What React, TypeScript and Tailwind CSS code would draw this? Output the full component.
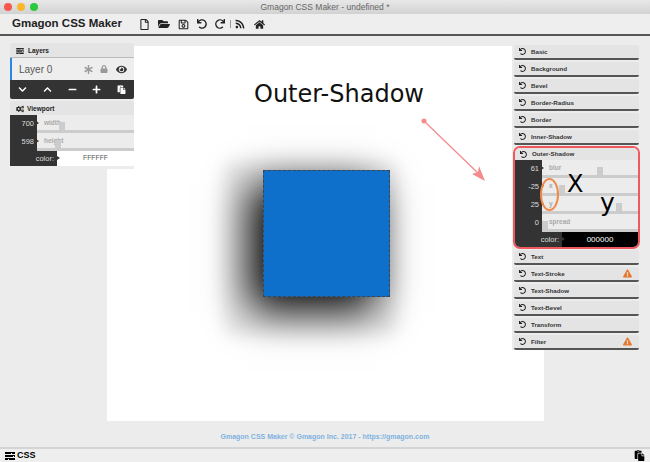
import React from "react";
import {
  FaRegFile,
  FaFolderOpen,
  FaRegSave,
  FaUndo,
  FaRedo,
  FaRss,
  FaHome,
  FaAsterisk,
  FaLock,
  FaEye,
  FaChevronDown,
  FaChevronUp,
  FaMinus,
  FaPlus,
  FaPaste,
  FaCogs,
  FaExclamationTriangle,
} from "react-icons/fa";

const TasksIcon = ({ className }: { className?: string }) => (
  <svg viewBox="0 0 10 8" className={className} fill="currentColor">
    <path d="M0 0h10v2H7V1H6v1H0zM0 3h10v2H9V4H8v1H0zM0 6h10v2H4V7H3v1H0z" />
  </svg>
);

const PanelRow = ({ label, warn }: { label: string; warn?: boolean }) => (
  <div className="flex h-[15px] w-[125px] items-center rounded-[2px] border-b-2 border-[#555] bg-[#e4e4e4] pl-[5px] pr-[5px] text-[6.2px] font-bold text-[#333]">
    <FaUndo className="mr-[5px] size-[7px] text-[#222]" />
    <span>{label}</span>
    {warn && <FaExclamationTriangle className="ml-auto mr-[2px] size-[9px] text-[#e8772e]" />}
  </div>
);

const Slider = ({ value, label, thumb }: { value: string; label: string; thumb: string }) => (
  <div className="flex h-[18px]">
    <div className="flex h-full w-[27px] items-center justify-end bg-[#333] pr-[3px] text-[7.5px] text-[#ddd]">
      {value}
    </div>
    <div className="relative flex-1 border-b-[3px] border-[#ccc] bg-[#ececec] pl-[7px] pt-[3px] text-[6.5px] font-bold text-[#aaa]">
      <span className="absolute -left-[1px] top-[6px] border-y-[2px] border-l-[3px] border-y-transparent border-l-[#333]" />
      {label}
      <span className={`absolute bottom-0 h-[8px] w-[6px] bg-[#ccc] ${thumb}`} />
    </div>
  </div>
);

const ColorRow = ({ value, dark }: { value: string; dark?: boolean }) => (
  <div className="flex h-[15px]">
    <div className="relative flex h-full w-[47px] items-center justify-end bg-[#333] pr-[3px] text-[7.5px] text-[#ddd]">
      color:
      <span className="absolute -right-[3px] top-[5px] z-10 border-y-[2px] border-l-[3px] border-y-transparent border-l-[#333]" />
    </div>
    <div className={`flex flex-1 items-center justify-center ${dark ? "bg-black text-[8px] text-white" : "bg-white text-[6.8px] text-[#555]"}`}>
      {value}
    </div>
  </div>
);

export default function App() {
  return (
    <div className="relative flex h-[462px] w-[650px] flex-col overflow-hidden bg-[#ececec] font-['Liberation_Sans',sans-serif]">
      {/* window title bar */}
      <div className="relative flex h-[14px] items-center justify-center bg-gradient-to-b from-[#e8e8e8] to-[#d2d2d2] text-[8.5px] text-[#666]">
        <div className="absolute left-[4px] top-[3px] flex gap-[5px]">
          <span className="size-[8px] rounded-full bg-[#f9584f]" />
          <span className="size-[8px] rounded-full bg-[#fbb72c]" />
          <span className="size-[8px] rounded-full bg-[#2cc840]" />
        </div>
        Gmagon CSS Maker - undefined *
      </div>

      {/* toolbar */}
      <div className="flex h-[22px] items-center border-b-2 border-[#555] bg-[#eeeeee] pl-[12px] text-[#222]">
        <span className="w-[127px] text-[11.5px] font-bold">Gmagon CSS Maker</span>
        <div className="flex items-center gap-[8px] text-[11px]">
          <FaRegFile />
          <FaFolderOpen className="text-[12px]" />
          <FaRegSave />
          <FaUndo className="text-[10px]" />
          <FaRedo className="text-[10px]" />
          <span className="-ml-[3px] h-[8px] w-px bg-[#999]" />
          <FaRss className="-ml-[4px] text-[10px]" />
          <FaHome className="ml-[1px] text-[11px]" />
        </div>
      </div>

      {/* canvas */}
      <div className="flex flex-1 flex-col items-center pt-[10px]">
        <div className="flex h-[375px] w-[437px] items-start justify-center bg-white pl-[2px] pt-[124px]">
          <div className="size-[127px] border border-dashed border-[#444] bg-[#0e70cb] shadow-[-14px_14px_40px_#000,-16px_15px_16px_22px_#ebebeb]" />
        </div>
        <div className="mt-[11px] text-[7px] font-bold text-[#7fb2e0]">
          Gmagon CSS Maker © Gmagon Inc. 2017 - https://gmagon.com
        </div>
      </div>

      {/* bottom bar */}
      <div className="flex h-[15px] items-center justify-between border-t-2 border-[#d4d4d4] bg-[#eeeeee] pl-[5px] pr-[5px] text-black">
        <div className="flex items-center gap-[2px] text-[9px] font-bold">
          <TasksIcon className="h-[8px] w-[10px]" />
          CSS
        </div>
        <FaPaste className="text-[11px]" />
      </div>

      {/* left floating panels */}
      <div className="absolute left-[10px] top-[43px] flex w-[124px] flex-col bg-[#ececec] pb-[3px]">
        <div className="flex h-[15px] items-center rounded-t-[3px] border-b border-[#bbb] bg-[#e4e4e4] pl-[6px] pt-[1px] text-[6.5px] font-bold text-[#222]">
          <TasksIcon className="mr-[4px] h-[6px] w-[8px]" />
          Layers
        </div>
        <div className="flex h-[22px] items-center border-l-2 border-[#2a86e8] bg-[#eeeeee] pl-[7px] pr-[7px] text-[10px] text-[#555]">
          <span className="flex-1">Layer 0</span>
          <FaAsterisk className="mr-[7px] text-[9px] text-[#999]" />
          <FaLock className="mr-[8px] text-[8px] text-[#999]" />
          <FaEye className="text-[11px] text-[#333]" />
        </div>
        <div className="flex h-[19px] items-center justify-between rounded-b-[2px] bg-[#333] pl-[8px] pr-[8px] text-[9px] text-white">
          <FaChevronDown />
          <FaChevronUp />
          <FaMinus />
          <FaPlus />
          <FaPaste />
        </div>
        <div className="mt-[2px] flex h-[14px] items-center rounded-t-[3px] bg-[#e4e4e4] pl-[6px] pt-[1px] text-[6.5px] font-bold text-[#222]">
          <FaCogs className="mr-[3px] text-[8px]" />
          Viewport
        </div>
        <Slider value="700" label="width" thumb="left-[22px]" />
        <Slider value="598" label="height" thumb="left-[18px]" />
        <ColorRow value="FFFFFF" />
      </div>

      {/* right floating panels */}
      <div className="absolute left-[512px] top-[44px] flex flex-col items-center gap-[2px] bg-[#ececec] px-px pt-px">
        {["Basic", "Background", "Bevel", "Border-Radius", "Border", "Inner-Shadow"].map((label) => (
          <PanelRow key={label} label={label} />
        ))}
        <div className="-mb-px -mt-px w-[127px] overflow-hidden rounded-[7px] border-2 border-[#f0595c]">
          <div className="flex h-[12px] items-center bg-[#e4e4e4] pl-[5px] text-[6.2px] font-bold text-[#333]">
            <FaUndo className="mr-[5px] size-[7px] text-[#222]" />
            Outer-Shadow
          </div>
          <Slider value="61" label="blur" thumb="left-[55px]" />
          <Slider value="-25" label="x" thumb="left-[17px]" />
          <Slider value="25" label="y" thumb="left-[74px]" />
          <Slider value="0" label="spread" thumb="left-0" />
          <ColorRow dark value="000000" />
        </div>
        {["Text", "Text-Stroke", "Text-Shadow", "Text-Bevel", "Transform", "Filter"].map((label) => (
          <PanelRow key={label} label={label} warn={label === "Text-Stroke" || label === "Filter"} />
        ))}
      </div>

      {/* annotations drawn over the screenshot */}
      <span className="absolute left-[254px] top-[75px] font-['DejaVu_Sans',sans-serif] text-[24px] leading-[38px] text-[#111]">
        Outer-Shadow
      </span>
      <span className="absolute left-[567px] top-[168px] font-['DejaVu_Sans',sans-serif] text-[24px] leading-[32px] text-black">
        X
      </span>
      <span className="absolute left-[600px] top-[188px] font-['DejaVu_Sans',sans-serif] text-[25px] leading-[30px] text-black">
        y
      </span>
      <span className="absolute left-[540px] top-[178px] h-[33px] w-[19px] rounded-[50%] border-2 border-[#f08a4b]" />
      <svg className="absolute left-[418px] top-[115px] h-[72px] w-[72px]" viewBox="0 0 72 72" fill="none">
        <circle cx="6" cy="6" r="2.5" fill="#f58a8a" />
        <path d="M6 6L62 60" stroke="#f58a8a" strokeWidth="1.2" />
        <path d="M67 66L54 59L60 57L61 51Z" fill="#f58a8a" />
      </svg>
    </div>
  );
}
